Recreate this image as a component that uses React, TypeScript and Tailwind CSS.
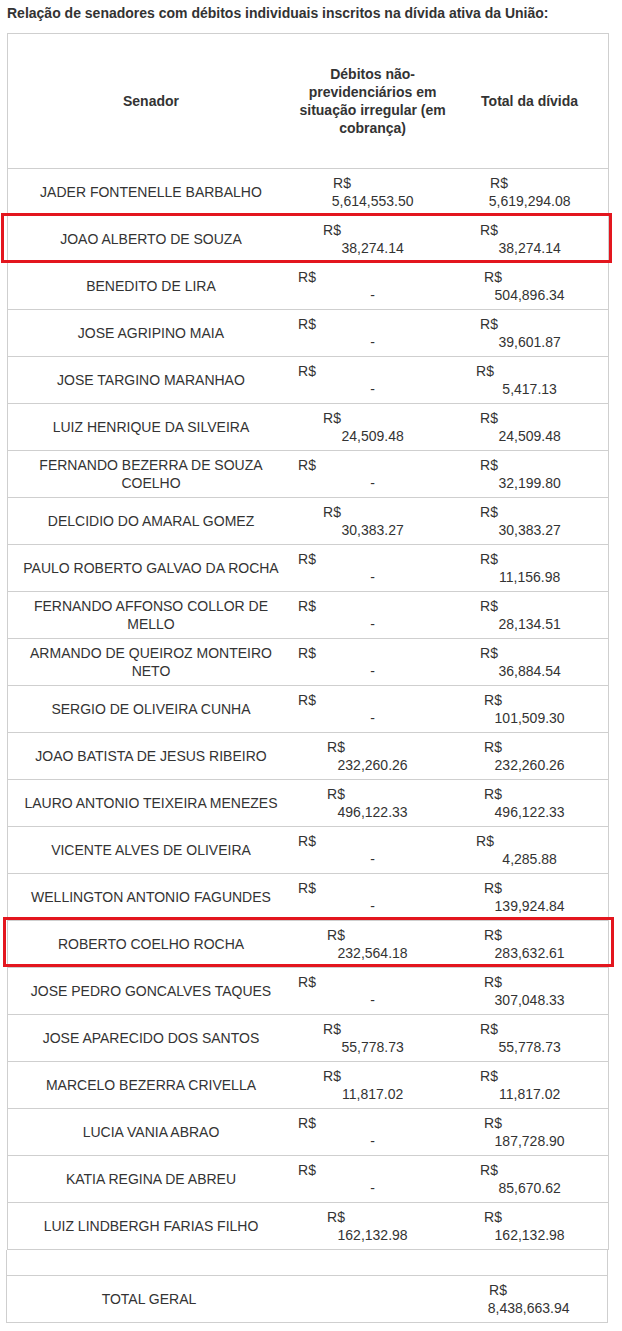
import React from 'react';

const rows: [string, string, string][] = [
  ['JADER FONTENELLE BARBALHO', '5,614,553.50', '5,619,294.08'],
  ['JOAO ALBERTO DE SOUZA', '38,274.14', '38,274.14'],
  ['BENEDITO DE LIRA', '-', '504,896.34'],
  ['JOSE AGRIPINO MAIA', '-', '39,601.87'],
  ['JOSE TARGINO MARANHAO', '-', '5,417.13'],
  ['LUIZ HENRIQUE DA SILVEIRA', '24,509.48', '24,509.48'],
  ['FERNANDO BEZERRA DE SOUZA COELHO', '-', '32,199.80'],
  ['DELCIDIO DO AMARAL GOMEZ', '30,383.27', '30,383.27'],
  ['PAULO ROBERTO GALVAO DA ROCHA', '-', '11,156.98'],
  ['FERNANDO AFFONSO COLLOR DE MELLO', '-', '28,134.51'],
  ['ARMANDO DE QUEIROZ MONTEIRO NETO', '-', '36,884.54'],
  ['SERGIO DE OLIVEIRA CUNHA', '-', '101,509.30'],
  ['JOAO BATISTA DE JESUS RIBEIRO', '232,260.26', '232,260.26'],
  ['LAURO ANTONIO TEIXEIRA MENEZES', '496,122.33', '496,122.33'],
  ['VICENTE ALVES DE OLIVEIRA', '-', '4,285.88'],
  ['WELLINGTON ANTONIO FAGUNDES', '-', '139,924.84'],
  ['ROBERTO COELHO ROCHA', '232,564.18', '283,632.61'],
  ['JOSE PEDRO GONCALVES TAQUES', '-', '307,048.33'],
  ['JOSE APARECIDO DOS SANTOS', '55,778.73', '55,778.73'],
  ['MARCELO BEZERRA CRIVELLA', '11,817.02', '11,817.02'],
  ['LUCIA VANIA ABRAO', '-', '187,728.90'],
  ['KATIA REGINA DE ABREU', '-', '85,670.62'],
  ['LUIZ LINDBERGH FARIAS FILHO', '162,132.98', '162,132.98'],
];

// the "R$" line is padded like an accounting cell: shorter numbers get a wider line
const padWidth: Record<number, string> = {
  1: 'w-[149px]',
  8: 'w-[107px]',
  9: 'w-[99px]',
  10: 'w-[91px]',
  12: 'w-[79px]',
};

function Money({value}: {value: string}) {
  return (
    <>
      <div className={`mx-auto text-left ${padWidth[value.length] ?? 'w-[99px]'}`}>R$</div>
      <div>{value}</div>
    </>
  );
}

export default function App() {
  return (
    <div className="relative w-[622px] min-h-[1331px] bg-white text-[14px] leading-[18px] text-[#333] font-['Liberation_Sans',Arial,sans-serif]">
      <p className="pl-[7px] pt-[4px] font-bold">Relação de senadores com débitos individuais inscritos na dívida ativa da União:</p>

      <table className="mt-[11px] ml-[7px] w-[602px] table-fixed border-collapse border border-[#cfcfcf]">
        <colgroup>
          <col className="w-[286px]" />
          <col className="w-[157px]" />
          <col className="w-[157px]" />
        </colgroup>
        <thead>
          <tr className="h-[135px]">
            <th className="px-[8px] text-center align-middle font-bold">Senador</th>
            <th className="px-[3px] text-center align-middle font-bold">Débitos não-previdenciários em situação irregular (em cobrança)</th>
            <th className="px-[3px] text-center align-middle font-bold">Total da dívida</th>
          </tr>
        </thead>
        <tbody>
          {rows.map(([name, debt, total]) => (
            <tr key={name} className="h-[47px] border-t border-[#cfcfcf]">
              <td className="px-[8px] text-center align-middle">{name}</td>
              <td className="px-[3px] py-[5px] text-center align-middle">
                <Money value={debt} />
              </td>
              <td className="px-[3px] py-[5px] text-center align-middle">
                <Money value={total} />
              </td>
            </tr>
          ))}
        </tbody>
      </table>

      <table className="ml-[6px] w-[602px] table-fixed border-collapse border border-t-0 border-[#cfcfcf]">
        <colgroup>
          <col className="w-[284px]" />
          <col className="w-[159px]" />
          <col className="w-[157px]" />
        </colgroup>
        <tbody>
          <tr className="h-[25px]">
            <td colSpan={3}></td>
          </tr>
          <tr className="h-[47px] border-t border-[#cfcfcf]">
            <td className="px-[8px] text-center align-middle">TOTAL GERAL</td>
            <td></td>
            <td className="px-[3px] py-[5px] text-center align-middle">
              <Money value="8,438,663.94" />
            </td>
          </tr>
        </tbody>
      </table>

      {/* highlight boxes drawn over the table */}
      <div className="absolute left-[1px] top-[213px] w-[611px] h-[50px] border-[3px] border-[#e3161e]" />
      <div className="absolute left-[3px] top-[917px] w-[611px] h-[50px] border-[3px] border-[#e3161e]" />
    </div>
  );
}
